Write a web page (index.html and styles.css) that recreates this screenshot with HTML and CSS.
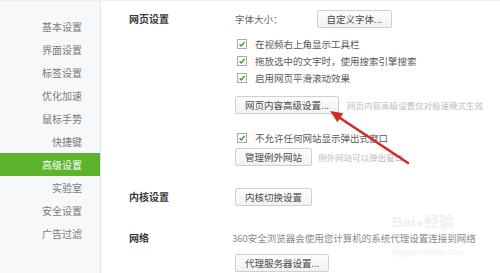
FILE: index.html
```html
<!DOCTYPE html>
<html lang="zh-CN">
<head>
<meta charset="utf-8">
<title>高级设置</title>
<link rel="stylesheet" href="styles.css">
</head>
<body>
<div class="app">
  <nav class="sidebar">
    <div class="nav-item">基本设置</div>
    <div class="nav-item">界面设置</div>
    <div class="nav-item">标签设置</div>
    <div class="nav-item">优化加速</div>
    <div class="nav-item">鼠标手势</div>
    <div class="nav-item">快捷键</div>
    <div class="nav-item active">高级设置</div>
    <div class="nav-item">实验室</div>
    <div class="nav-item">安全设置</div>
    <div class="nav-item">广告过滤</div>
  </nav>
  <main class="main">
    <section class="section">
      <div class="section-title title-btn">网页设置</div>
      <div class="content">
        <div class="row row-btn">
          <span class="label">字体大小：</span>
          <button class="btn btn-font">自定义字体...</button>
        </div>
        <div class="check-group">
          <label class="check-row"><span class="checkbox"><svg viewBox="0 0 10 10"><path d="M2 5.2 L4.2 7.4 L8.2 2.4"/></svg></span>在视频右上角显示工具栏</label>
          <label class="check-row"><span class="checkbox"><svg viewBox="0 0 10 10"><path d="M2 5.2 L4.2 7.4 L8.2 2.4"/></svg></span>拖放选中的文字时，使用搜索引擎搜索</label>
          <label class="check-row"><span class="checkbox"><svg viewBox="0 0 10 10"><path d="M2 5.2 L4.2 7.4 L8.2 2.4"/></svg></span>启用网页平滑滚动效果</label>
        </div>
        <div class="row row-btn gap-adv">
          <button class="btn">网页内容高级设置...</button>
          <span class="hint">网页内容高级设置仅对极速模式生效</span>
        </div>
        <label class="check-row gap-popup"><span class="checkbox"><svg viewBox="0 0 10 10"><path d="M2 5.2 L4.2 7.4 L8.2 2.4"/></svg></span>不允许任何网站显示弹出式窗口</label>
        <div class="row row-btn gap-small">
          <button class="btn">管理例外网站</button>
          <span class="hint hint-near">例外网站可以弹出窗口</span>
        </div>
      </div>
    </section>
    <section class="section gap-kernel">
      <div class="section-title title-btn">内核设置</div>
      <div class="content">
        <div class="row row-btn">
          <button class="btn">内核切换设置</button>
        </div>
      </div>
    </section>
    <section class="section gap-net">
      <div class="section-title title-text">网络</div>
      <div class="content">
        <div class="row row-text net-text">360安全浏览器会使用您计算机的系统代理设置连接到网络</div>
        <div class="row row-btn gap-proxy">
          <button class="btn">代理服务器设置...</button>
        </div>
      </div>
    </section>
  </main>
  <div class="watermark">
    <span class="wm-logo">Bai<span class="wm-paw">&#9679;</span>经验</span>
  </div>
  <div class="watermark-url">jingyan.baidu.com</div>
  <svg class="arrow" viewBox="0 0 500 273" width="500" height="273">
    <line x1="408" y1="163" x2="337" y2="116" />
    <polygon points="330,111 343.2,113.2 337.4,122.2" />
  </svg>
</div>
</body>
</html>
```

FILE: styles.css
```css
html, body {
  margin: 0;
  padding: 0;
  background: #ffffff;
}

body {
  width: 500px;
  height: 273px;
  overflow: hidden;
  font-family: "Noto Sans CJK SC", "Noto Sans", sans-serif;
}

.app {
  position: relative;
  display: flex;
  width: 500px;
  height: 273px;
  border-top: 1px solid #f0f0f0;
  box-sizing: border-box;
}

.sidebar {
  width: 101px;
  flex: 0 0 101px;
  box-sizing: border-box;
  background: #f7f8fa;
  border-right: 1px solid #e3e4e6;
  padding-top: 14px;
}

.nav-item {
  height: 23px;
  line-height: 23px;
  text-align: right;
  padding-right: 18px;
  font-size: 10px;
  color: #7a7a7a;
}

.nav-item.active {
  background: #5db42c;
  color: #ffffff;
}

.main {
  flex: 1;
  padding: 9px 0 0 28px;
}

.section {
  display: grid;
  grid-template-columns: 106px 1fr;
  align-items: start;
}

.section-title {
  font-size: 10px;
  font-weight: bold;
  color: #3a3a3a;
}

.title-btn {
  height: 18px;
  line-height: 18px;
}

.title-text {
  height: 17px;
  line-height: 17px;
}

.content {
  display: flex;
  flex-direction: column;
}

.row {
  display: flex;
  align-items: center;
}

.row-btn {
  height: 18px;
}

.row-text {
  height: 17px;
}

.label {
  font-size: 9.5px;
  color: #666666;
}

.btn {
  height: 18px;
  box-sizing: border-box;
  padding: 0 9px;
  border: 1px solid #d0d0d0;
  border-radius: 2px;
  background: linear-gradient(#fdfdfd, #f1f1f1);
  font-family: "Noto Sans CJK SC", sans-serif;
  font-size: 9.5px;
  line-height: 16px;
  color: #4a4a4a;
}

.btn-font {
  margin-left: 34px;
}

.check-group {
  margin-top: 7px;
  display: flex;
  flex-direction: column;
}

.check-row {
  display: flex;
  align-items: center;
  height: 17px;
  font-size: 9.5px;
  color: #5a5a5a;
}

.checkbox {
  width: 10px;
  height: 10px;
  box-sizing: border-box;
  border: 1px solid #a9a9a9;
  background: #ffffff;
  margin: 0 8px 0 2px;
  display: flex;
}

.checkbox svg {
  width: 8px;
  height: 8px;
  fill: none;
  stroke: #3c9b27;
  stroke-width: 1.8;
}

.hint {
  margin-left: 8px;
  font-size: 8.5px;
  color: #bdbdbd;
}

.hint-near {
  margin-left: 6px;
}

.gap-adv {
  margin-top: 10px;
}

.gap-popup {
  margin-top: 15px;
}

.gap-small {
  margin-top: 2px;
}

.gap-kernel {
  margin-top: 22px;
}

.gap-net {
  margin-top: 23px;
}

.net-text {
  font-size: 9.5px;
  color: #8a8a8a;
  margin-left: -3px;
}

.gap-proxy {
  margin-top: 8px;
}

.watermark {
  position: absolute;
  left: 392px;
  top: 212px;
  pointer-events: none;
}

.wm-logo {
  font-family: "Liberation Sans", sans-serif;
  font-size: 15px;
  font-weight: bold;
  color: #efefef;
  line-height: 17px;
  display: block;
}

.wm-paw {
  font-size: 11px;
  margin: 0 1px;
}

.watermark-url {
  position: absolute;
  left: 392px;
  top: 246px;
  font-family: "Liberation Sans", sans-serif;
  font-size: 9px;
  color: #f0f0f0;
  line-height: 11px;
  pointer-events: none;
}

.arrow {
  position: absolute;
  left: 0;
  top: -1px;
  pointer-events: none;
}

.arrow line {
  stroke: #d22a24;
  stroke-width: 2.6;
  stroke-linecap: round;
}

.arrow polygon {
  fill: #d22a24;
}
```
